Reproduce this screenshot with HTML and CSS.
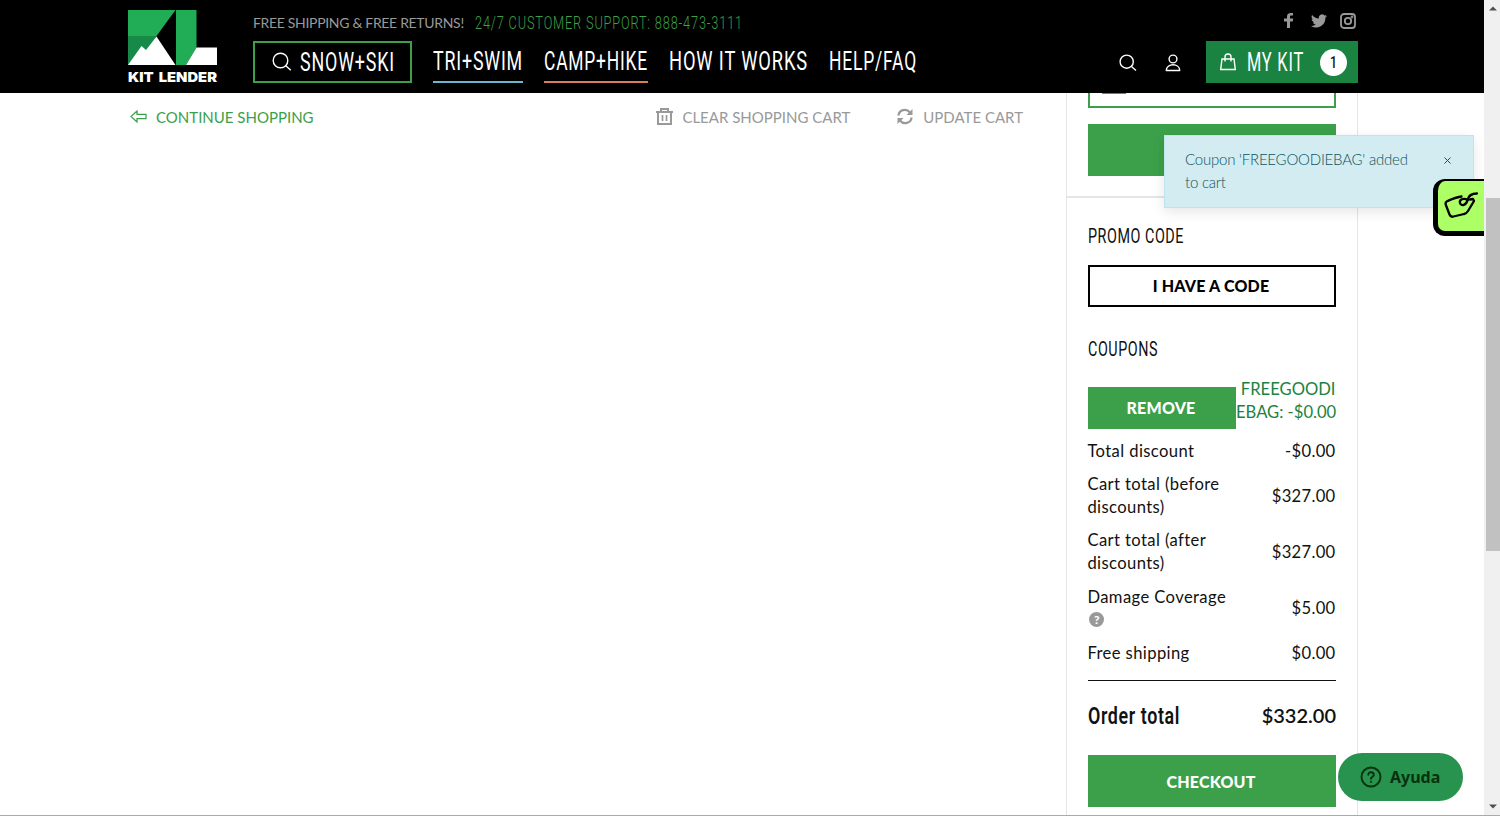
FILE: index.html
```html
<!DOCTYPE html>
<html lang="en">
<head>
<meta charset="utf-8">
<title>Kit Lender – Cart</title>
<link rel="stylesheet" href="styles.css">
</head>
<body>
<div class="window">
<div class="page">
  <header class="header">
    <svg class="logo" width="90" height="75" viewBox="0 0 90 75">
      <path fill="#21ad56" d="M0 0h47.500L28.500 26H0z"/>
      <path fill="#178a4a" d="M0 26h28.500L19 44 0 55z"/>
      <path fill="#21ad56" d="M48 0h20.500v37.500L58 55H48z"/>
      <path fill="#fff" d="M0 55l13.500-19 4.500 4 10.500-13.500L47.500 55zM68.500 37.500H89V55H58z"/>
      <text class="logo-text" x="0" y="72" textLength="89" lengthAdjust="spacingAndGlyphs">KIT LENDER</text>
    </svg>
    <div class="header-left">
      <div class="topline">
        <span class="ship">FREE SHIPPING &amp; FREE RETURNS!</span>
        <span class="cond phone" data-width="268"><span>24/7 CUSTOMER SUPPORT: 888-473-3111</span></span>
      </div>
      <nav class="nav">
        <a class="nav-box">
          <svg class="line-icon" width="20" height="20" viewBox="0 0 20 20"><circle cx="8.500" cy="8.500" r="7.300"/><path d="M13.800 13.800l5 4.500"/></svg>
          <span class="cond" data-width="95"><span>SNOW+SKI</span></span>
        </a>
        <a class="nav-link tri"><span class="cond" data-width="90"><span>TRI+SWIM</span></span></a>
        <a class="nav-link camp"><span class="cond" data-width="104"><span>CAMP+HIKE</span></span></a>
        <a class="nav-link"><span class="cond" data-width="139"><span>HOW IT WORKS</span></span></a>
        <a class="nav-link"><span class="cond" data-width="88"><span>HELP/FAQ</span></span></a>
      </nav>
    </div>
    <div class="header-right">
      <div class="social">
        <svg width="10" height="15" viewBox="0 0 10 15"><path fill="#999" d="M3 15V8.500H0V5.500h3V3.600C3 1.200 4.400 0 6.700 0H9v2.600H7.300C6.300 2.600 6 3 6 3.800v1.700h3.200l-.5 3H6V15z"/></svg>
        <svg width="16" height="14" viewBox="0 0 24 20"><path fill="#999" d="M24 2.400a10 10 0 0 1-2.800.8A5 5 0 0 0 23.300.500a10 10 0 0 1-3.100 1.200 4.900 4.900 0 0 0-8.400 4.500A14 14 0 0 1 1.700 1a4.900 4.900 0 0 0 1.500 6.600 5 5 0 0 1-2.200-.6c0 2.300 1.600 4.400 3.900 4.900a5 5 0 0 1-2.200.1 4.900 4.900 0 0 0 4.600 3.400A9.900 9.900 0 0 1 0 17.500 14 14 0 0 0 21.500 5c1-.7 1.800-1.600 2.500-2.600z"/></svg>
        <svg width="16" height="16" viewBox="0 0 16 16" fill="none" stroke="#999" stroke-width="1.800"><rect x="1" y="1" width="14" height="14" rx="3"/><circle cx="8" cy="8" r="3.200"/><circle cx="12" cy="4" r=".5"/></svg>
      </div>
      <div class="actions">
        <svg class="line-icon" width="18" height="18" viewBox="0 0 18 18"><circle cx="7.700" cy="7.700" r="6.600"/><path d="M12.500 12.500l4.500 4"/></svg>
        <svg class="line-icon user" width="16" height="18" viewBox="0 0 16 18"><circle cx="8" cy="5" r="3.900"/><path d="M1.300 16.500c0-7.600 13.400-7.600 13.400 0z" stroke-linejoin="round"/></svg>
        <a class="kit">
          <svg class="line-icon" width="16" height="18" viewBox="0 0 16 18"><path d="M2 6h12l1.300 10.500H.7zM5 8.500V4a3 3 0 0 1 6 0v4.500"/></svg>
          <span class="cond kit-label" data-width="57"><span>MY KIT</span></span>
          <span class="count"><span class="cond" data-width="7"><span>1</span></span></span>
        </a>
      </div>
    </div>
  </header>

  <div class="content">
    <main class="cart-links">
      <a class="continue">
        <svg width="17" height="13" viewBox="0 0 17 13" fill="none" stroke="#3ca04a" stroke-width="1.200"><path d="M1 6.500L7 1v3.300h9v4.400H7V12z"/></svg>
        <span>CONTINUE SHOPPING</span>
      </a>
      <a class="clear">
        <svg width="17" height="17" viewBox="0 0 17 17" fill="none" stroke="#999" stroke-width="2"><path d="M0 4h17M5 4V1h7v3M2 4v12h13V4"/><path d="M6.500 7v6M10.500 7v6" stroke-width="1.700"/></svg>
        <span>CLEAR SHOPPING CART</span>
      </a>
      <a class="update">
        <svg width="16" height="17" viewBox="0 0 16 17" fill="none" stroke="#999" stroke-width="2.300"><path d="M1.500 7.500C2 1.500 9.500 0 13 4.500M14.500 9.500C14 15.500 6.500 17 3 12.500"/><path fill="#999" stroke="none" d="M15.500 1v6h-6zM.5 16v-6h6z"/></svg>
        <span>UPDATE CART</span>
      </a>
    </main>
    <aside class="summary">
      <div class="estimate">
        <div class="field"><span class="field-mark"></span></div>
        <div class="bar"></div>
      </div>
      <div class="totals">
        <h3 class="cond h" data-width="96"><span>PROMO CODE</span></h3>
        <button class="code-btn">I HAVE A CODE</button>
        <h3 class="cond h coupons" data-width="70"><span>COUPONS</span></h3>
        <div class="coupon">
          <button class="green-btn remove">REMOVE</button>
          <span class="coupon-name">FREEGOODI<br>EBAG: -$0.00</span>
        </div>
        <div class="row"><span>Total discount</span><span>-$0.00</span></div>
        <div class="row"><span>Cart total (before<br>discounts)</span><span>$327.00</span></div>
        <div class="row"><span>Cart total (after<br>discounts)</span><span>$327.00</span></div>
        <div class="row"><span>Damage Coverage<br><i class="help">?</i></span><span>$5.00</span></div>
        <div class="row"><span>Free shipping</span><span>$0.00</span></div>
        <div class="order">
          <span class="cond order-label" data-width="92"><span>Order total</span></span>
          <span class="order-value">$332.00</span>
        </div>
        <button class="green-btn checkout">CHECKOUT</button>
      </div>
    </aside>
  </div>

  <div class="toast">
    <span>Coupon 'FREEGOODIEBAG' added<br>to cart</span>
    <svg width="7" height="7" viewBox="0 0 7 7" stroke="#0c5460" fill="none"><path d="M.5.500l6 6M6.500.500l-6 6"/></svg>
  </div>
  <div class="tag">
    <svg width="36" height="30" viewBox="0 0 36 30" fill="none" stroke="#000" stroke-width="2.300" stroke-linecap="round" stroke-linejoin="round"><path d="M18.500 5.500C13 6 8 8.500 4.500 10q-2.500 1.200-1.800 3.500L6.500 23.500q1.200 3 4 2l10.500-2.500q2.500-.5 4-3l6-10-1-2-3 .5"/><path d="M34 2.500c-6 0-8.500 2-9.500 6.500-1 5.500-6.500 6.500-7.500 3s3.500-5.500 8-3"/></svg>
  </div>
  <div class="ayuda">
    <svg width="22" height="22" viewBox="0 0 22 22" fill="none" stroke="#08320f" stroke-width="1.900" stroke-linecap="round"><circle cx="11" cy="11" r="9.500"/><path d="M8.300 8.800c0-3.500 5.500-3.300 5.500 0 0 2-2.800 2-2.800 4"/><path d="M11 15.800v.1"/></svg>
    <span>Ayuda</span>
  </div>
</div>
<div class="scroll">
  <svg width="8" height="5" viewBox="0 0 8 5"><path fill="#505050" d="M0 4.500L4 .500l4 4z"/></svg>
  <div class="thumb"></div>
  <svg class="down" width="8" height="5" viewBox="0 0 8 5"><path fill="#505050" d="M0 .500l4 4 4-4z"/></svg>
</div>
</div>
<script src="condense.js"></script>
</body>
</html>
```
FILE: condense.js
```js
// Condenses each display label horizontally to its set width.
document.querySelectorAll('.cond').forEach(function (label) {
  var text = label.firstElementChild;
  var width = Number(label.dataset.width);
  var natural = text.getBoundingClientRect().width;
  label.style.width = width + 'px';
  text.style.transform = 'scaleX(' + width / natural + ')';
});
```
FILE: styles.css
```css
* { box-sizing: border-box; }
body { margin: 0; font-family: Lato, sans-serif; font-size: 16px; color: #111; background: #fff; overflow: hidden; }
svg { display: block; flex: none; }
h3 { margin: 0; }
button { font-family: Lato, sans-serif; padding: 0; display: block; flex: none; }
.window { display: flex; height: 816px; border-bottom: 1px solid #aaa; }
.page { position: relative; width: 1484px; display: flex; flex-direction: column; overflow: hidden; }

.header { height: 93px; flex: none; background: #000; padding: 0 126px 0 128px; display: flex; align-items: flex-start; }
.logo { margin-top: 10px; }
.logo-text { font: 900 13.5px Inter, sans-serif; fill: #fff; word-spacing: 2px; }
.cond { display: block; flex: none; height: 30px; line-height: 30px; font-family: Roboto, sans-serif; font-weight: 400; font-size: 26px; letter-spacing: 1.2px; color: #fff; white-space: nowrap; }
.cond > span { display: inline-block; transform-origin: 0 0; }
.header-left { margin-left: 35px; }
.topline { display: flex; align-items: center; gap: 11px; height: 41px; padding-top: 4px; }
.ship { font-size: 14px; color: #999; width: 211px; white-space: nowrap; letter-spacing: -.32px; }
.phone { height: 20px; line-height: 20px; font-size: 18px; font-weight: 300; color: #3ca04a; }
.nav { display: flex; gap: 21px; }
.nav-box { width: 159px; height: 42px; border: 2px solid #3ca04a; display: flex; align-items: center; padding-left: 17px; gap: 8px; }
.nav-box .cond { margin-top: -1px; }
.line-icon { fill: none; stroke: #fff; stroke-width: 1.4; }
.nav-link { height: 42px; padding-top: 5px; }
.tri { border-bottom: 2px solid #6bb5cf; }
.camp { border-bottom: 2px solid #d5805d; }
.header-right { margin-left: auto; display: flex; flex-direction: column; align-items: flex-end; }
.social { display: flex; align-items: center; height: 41px; padding-right: 2px; gap: 17px; }
.social svg:last-child { margin-left: -4px; }
.actions { display: flex; align-items: center; height: 42px; }
.actions > .line-icon { margin-top: 2px; }
.user { margin-left: 28px; }
.kit { margin-left: 25px; width: 152px; height: 42px; background: #1a8341; display: flex; align-items: center; padding-left: 14px; }
.kit-label { margin-left: 11px; margin-top: 2px; font-size: 25px; }
.count { margin-left: 16px; width: 27px; height: 27px; border-radius: 50%; background: #fff; display: flex; align-items: center; justify-content: center; }
.count .cond { height: 20px; line-height: 20px; font-size: 17px; font-weight: 500; letter-spacing: 0; color: #111; }

.content { display: flex; flex: 1; min-height: 0; }
.cart-links { width: 1066px; padding: 12px 43px 0 130px; display: flex; align-items: flex-start; }
.cart-links a { display: flex; align-items: center; height: 24px; font-size: 15px; color: #999; white-space: nowrap; }
.cart-links .continue { color: #3ca04a; gap: 9px; }
.cart-links svg { margin-top: -1px; }
.clear { margin-left: auto; gap: 9px; }
.update { margin-left: 47px; gap: 10px; }

.summary { width: 292px; border: solid #e5e5e5; border-width: 0 1px; }
.estimate { height: 105px; padding: 0 21px; border-bottom: 2px solid #e5e5e5; }
.field { height: 15px; border: 2px solid #3ca04a; border-top: 0; padding-left: 12px; }
.field-mark { display: block; width: 24px; height: 1px; background: #3ca04a; }
.bar { height: 52px; margin-top: 16px; background: #3ca04a; }
.totals { padding: 26px 21px 0; }
.h { height: 24px; line-height: 24px; font-size: 21px; font-weight: 400; letter-spacing: .8px; color: #111; }
.code-btn { width: 248px; height: 42px; margin-top: 17px; padding: 0 2px 2px 0; border: 2px solid #000; background: #fff; font-size: 16px; font-weight: 900; letter-spacing: .2px; color: #000; }
.coupons { margin-top: 30px; }
.coupon { display: flex; height: 59px; margin-top: 15px; }
.green-btn { border: 0; background: #3ca04a; color: #fff; font-size: 16px; font-weight: 900; letter-spacing: .2px; padding: 0 2px 2px 0; }
.remove { width: 148px; height: 42px; margin-top: 11px; }
.coupon-name { width: 99.5px; margin-top: 2px; color: #1a8341; line-height: 23px; text-align: right; white-space: nowrap; font-size: 16.6px; }
.row { display: flex; justify-content: space-between; align-items: center; padding: 5.1px 0; line-height: 23px; font-size: 16.6px; letter-spacing: .4px; margin-left: -.6px; }
.row span { white-space: nowrap; }
.row > span:last-child { letter-spacing: .3px; padding-right: .5px; }
.help { display: block; width: 15px; height: 15px; margin: 3px 0 5px 2px; border-radius: 50%; background: #999; color: #fff; font: 900 12px/15px Lato, sans-serif; letter-spacing: 0; text-align: center; }
.order { margin-top: 10.5px; border-top: 1px solid #111; height: 75px; padding-bottom: 3px; display: flex; align-items: center; justify-content: space-between; }
.order-value { font-size: 20px; font-weight: 600; margin: -3px 0 0; }
.order-label { font-size: 23px; font-weight: 600; letter-spacing: .8px; color: #111; }
.checkout { width: 248px; height: 52px; padding-bottom: 0; }

.toast { position: absolute; left: 1164px; top: 135px; width: 310px; height: 73px; padding: 12px 22px 0 20px; display: flex; justify-content: space-between; background: #d3ecf1; border: 1px solid #bee5eb; box-shadow: 0 4px 12px rgba(0,0,0,.1); color: #0c5460; font-size: 15px; letter-spacing: -.22px; line-height: 23px; font-weight: 300; }
.toast svg { margin-top: 9px; }
.tag { position: absolute; left: 1433px; top: 179px; width: 51px; height: 57px; background: #acff64; border: solid #000; border-width: 2px 0 5px 5px; border-radius: 12px 0 0 12px; padding: 10px 0 0 5px; }
.ayuda { position: absolute; left: 1338px; top: 753px; width: 125px; height: 48px; border-radius: 24px; background: #27934e; display: flex; align-items: center; padding-left: 22px; gap: 8px; color: #08320f; font: 700 16px "Noto Sans", sans-serif; }

.scroll { width: 16px; background: #f0f0f0; padding: 6px 0 0 1px; display: flex; flex-direction: column; align-items: center; }
.thumb { width: 14px; height: 353px; margin-top: 187px; background: #c1c1c1; }
.down { margin-top: auto; margin-bottom: 6px; }
```
